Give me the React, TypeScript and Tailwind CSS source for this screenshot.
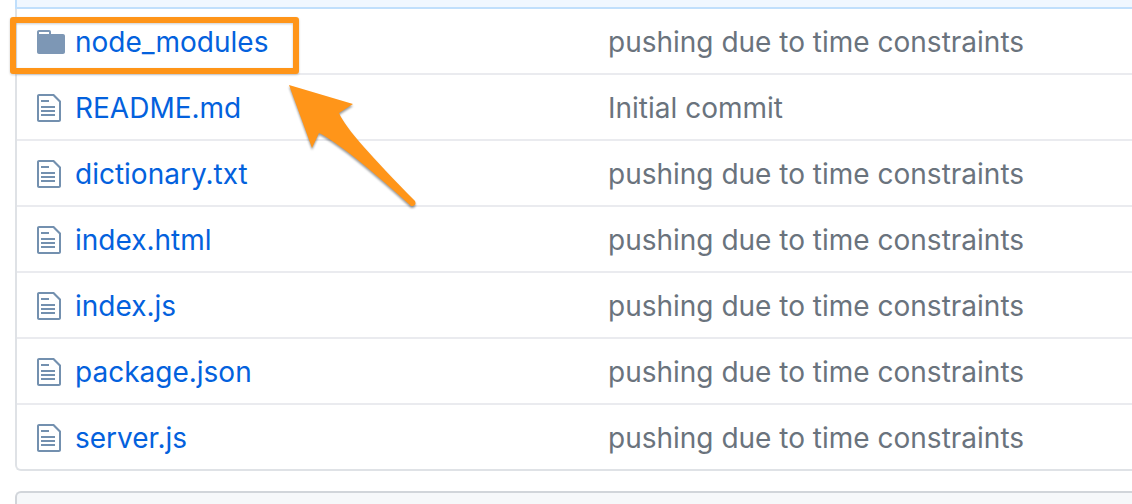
type Entry = { name: string; message: string; kind: "folder" | "file" };

const message = "pushing due to time constraints";

const entries: Entry[] = [
  { name: "node_modules", message, kind: "folder" },
  { name: "README.md", message: "Initial commit", kind: "file" },
  { name: "dictionary.txt", message, kind: "file" },
  { name: "index.html", message, kind: "file" },
  { name: "index.js", message, kind: "file" },
  { name: "package.json", message, kind: "file" },
  { name: "server.js", message, kind: "file" },
];

function FolderIcon() {
  return (
    <svg aria-hidden="true" viewBox="0 0 14 16" className="h-8 w-7 fill-[#7d97b5]">
      <path
        fillRule="evenodd"
        d="M13 4H7V3c0-.66-.31-1-1-1H1c-.55 0-1 .45-1 1v10c0 .55.45 1 1 1h12c.55 0 1-.45 1-1V5c0-.55-.45-1-1-1zM6 4H1V3h5v1z"
      />
    </svg>
  );
}

function FileIcon() {
  return (
    <svg aria-hidden="true" viewBox="0 0 12 16" className="h-8 w-6 fill-[#7390af]">
      <path
        fillRule="evenodd"
        d="M6 5H2V4h4v1zM2 8h7V7H2v1zm0 2h7V9H2v1zm0 2h7v-1H2v1zm10-7.5V14c0 .55-.45 1-1 1H1c-.55 0-1-.45-1-1V2c0-.55.45-1 1-1h7.5L12 4.5zM11 5L8 2H1v12h10V5z"
      />
    </svg>
  );
}

function Arrow() {
  return (
    <svg
      aria-hidden="true"
      viewBox="0 0 140 136"
      className="pointer-events-none absolute top-[80px] left-[284px] h-[136px] w-[140px] drop-shadow-[0_2px_1px_rgba(0,0,0,0.4)]"
    >
      <path
        fill="#ff9519"
        d="M5 5L69 24L55 33C62 49 88 77 131 121Q133 126 127 126C92 94 55 63 35 53L28 68Z"
      />
    </svg>
  );
}

export default function App() {
  return (
    <main className="relative flex min-h-screen flex-col bg-white pl-[15px] font-['Inter','Liberation_Sans',sans-serif] text-[28px] leading-8">
      <div className="h-[9px] border-b-2 border-l-2 border-[#c0dffc] bg-[#f0f7ff]" />

      <div className="rounded-bl-md border-b-2 border-l-2 border-[#dfe2e6]">
        <table className="w-full table-fixed border-separate border-spacing-0">
          <tbody>
            {entries.map((entry) => (
              <tr key={entry.name} className="group">
                <td className="w-[591px] border-b-2 border-[#eaebef] pt-[17px] pb-[15px] pl-5 group-last:border-b-0">
                  <div className="flex items-center">
                    <span className="w-[38px] shrink-0">
                      {entry.kind === "folder" ? <FolderIcon /> : <FileIcon />}
                    </span>
                    <a href="#" className="whitespace-nowrap text-[#0361dd]">
                      {entry.name}
                    </a>
                  </div>
                </td>
                <td className="border-b-2 border-[#eaebef] pt-[17px] pb-[15px] whitespace-nowrap text-[#6a737d] group-last:border-b-0">
                  {entry.message}
                </td>
              </tr>
            ))}
          </tbody>
        </table>
      </div>

      <div className="mt-5 flex-1 rounded-tl-md border-t-2 border-l-2 border-[#d1d5da] bg-[#f6f8fa]" />

      <div className="pointer-events-none absolute top-[17px] left-[10px] h-[57px] w-[289px] rounded-[3px] border-6 border-[#ff9519] drop-shadow-[0_1px_1px_rgba(0,0,0,0.2)]" />
      <Arrow />
    </main>
  );
}
